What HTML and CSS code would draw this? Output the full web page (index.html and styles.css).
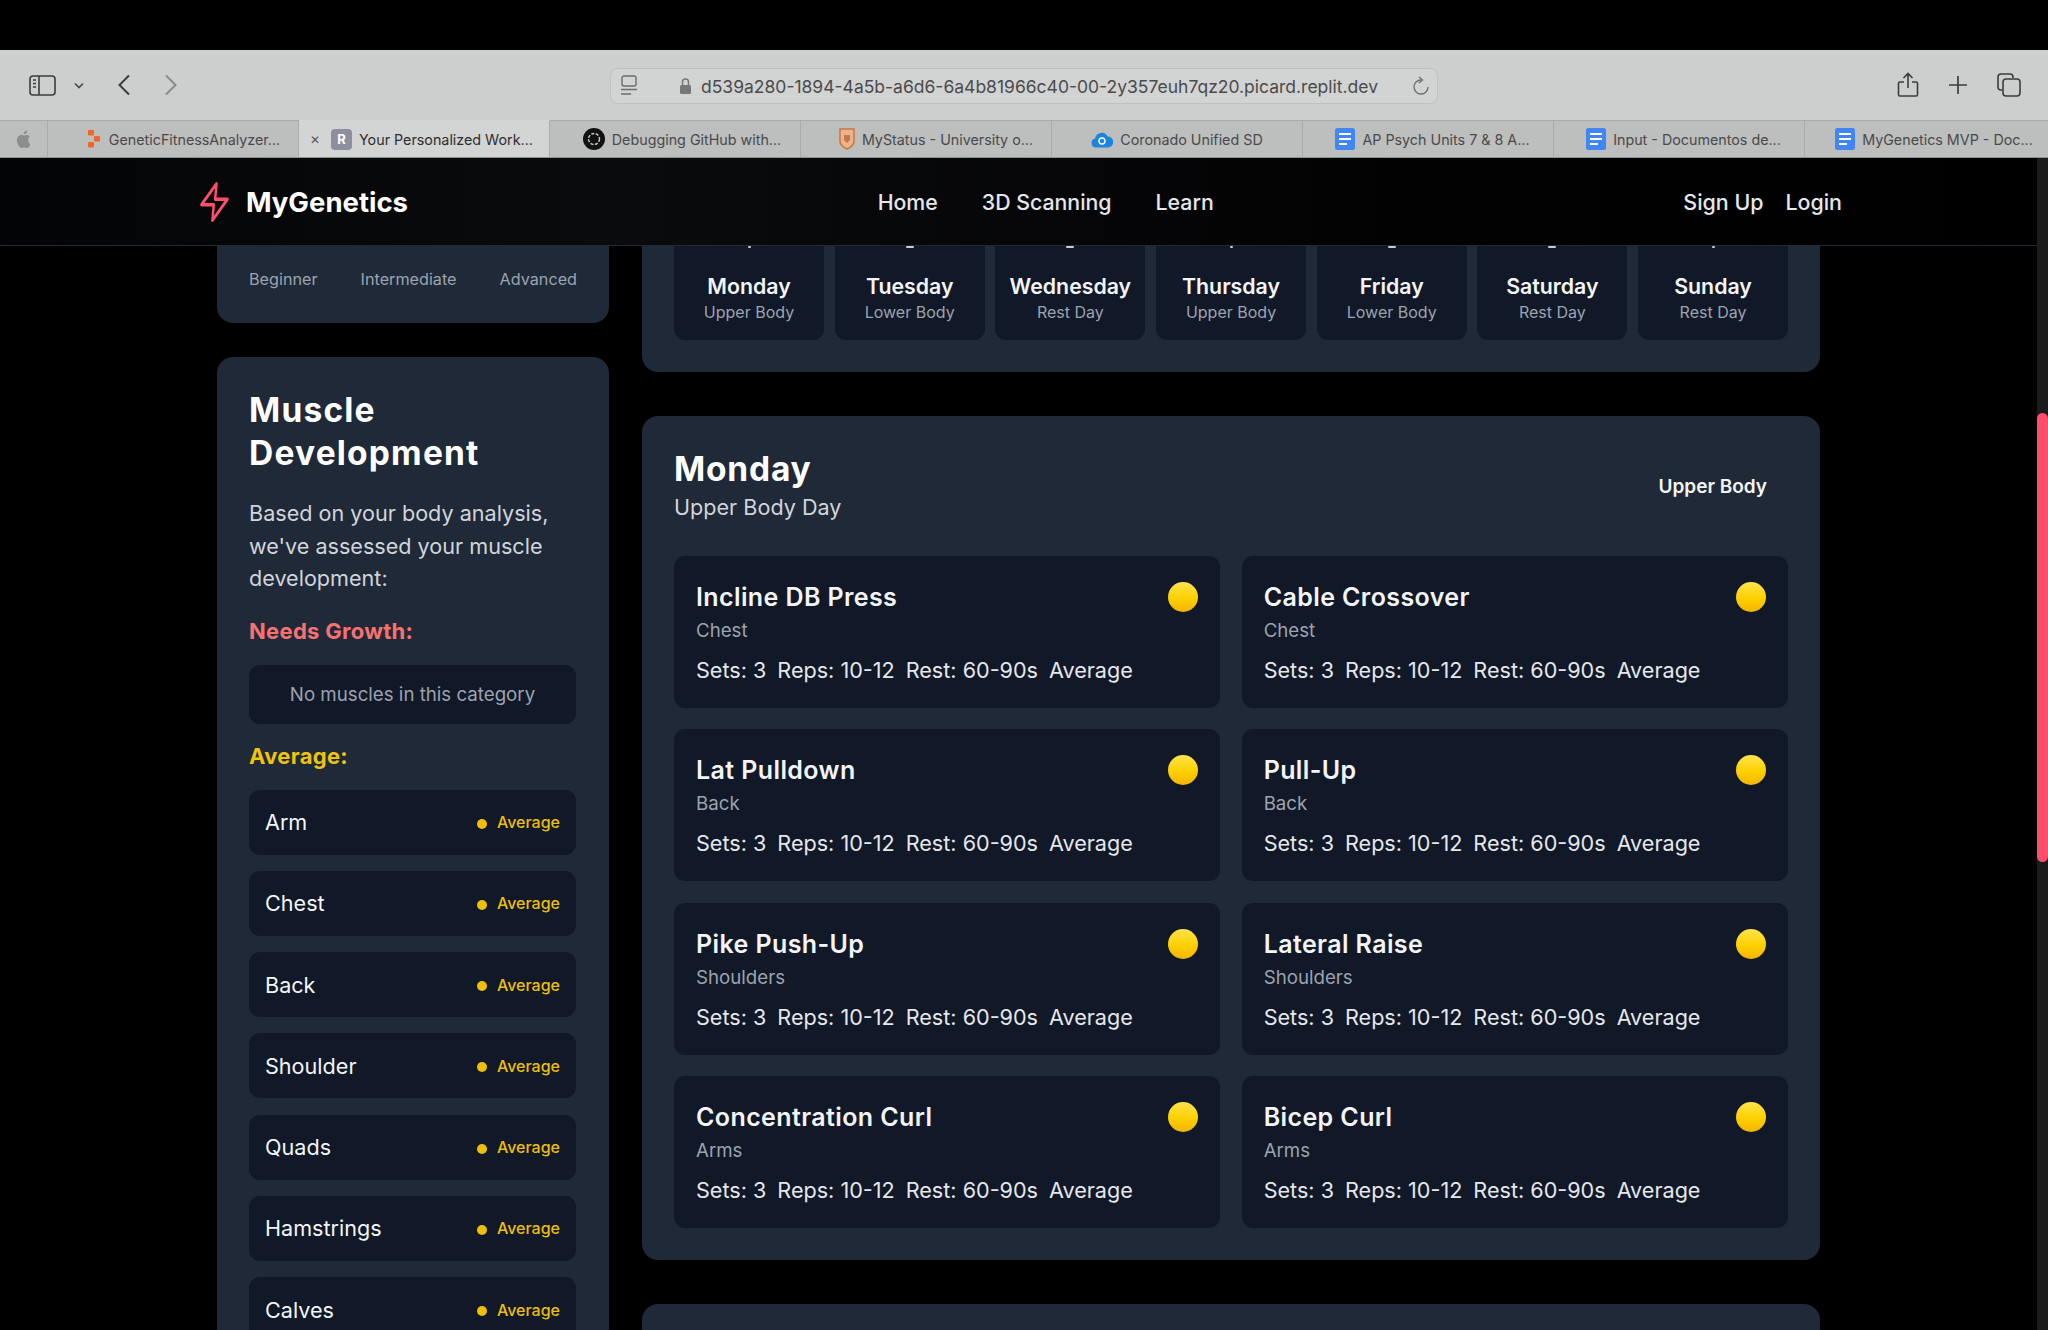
FILE: index.html
```html
<!DOCTYPE html>
<html lang="en">
<head>
  <meta charset="UTF-8">
  <title>MyGenetics</title>
  <link rel="stylesheet" href="styles.css">
</head>
<body>
  <div class="top-black"></div>

  <div class="browser">
    <div class="toolbar">
      <div class="tool-left">
        <svg class="ic-sidebar" width="27" height="21" viewBox="0 0 27 21" fill="none" stroke="#3c3c3c" stroke-width="1.6"><rect x="1" y="1" width="25" height="19" rx="3"/><path d="M10 1v19"/><path d="M4 5h3M4 8.500h3M4 12h3" stroke-width="1.400"/></svg>
        <svg class="ic-chevron" width="10" height="7" viewBox="0 0 10 7" fill="none" stroke="#4a4a4a" stroke-width="1.700"><path d="M1 1.500l4 4 4-4"/></svg>
        <svg class="ic-back" width="14" height="22" viewBox="0 0 14 22" fill="none" stroke="#3c3c3c" stroke-width="2"><path d="M12 1.500L2.500 11l9.500 9.500"/></svg>
        <svg class="ic-forward" width="14" height="22" viewBox="0 0 14 22" fill="none" stroke="#8a8a8a" stroke-width="2"><path d="M2 1.500L11.500 11 2 20.500"/></svg>
      </div>
      <div class="address">
        <svg width="18" height="22" viewBox="0 0 18 22" fill="none" stroke="#6e6e6e" stroke-width="1.400"><rect x="2" y="1" width="14" height="10" rx="2"/><path d="M1 14.500h16M1 19h10"/></svg>
        <div class="url">
          <svg width="13" height="18" viewBox="0 0 13 18"><path d="M3.500 8V5a3 3 0 0 1 6 0v3" fill="none" stroke="#777" stroke-width="1.500"/><rect x="1" y="8" width="11" height="9" rx="1.500" fill="#777"/></svg>
          <span>d539a280-1894-4a5b-a6d6-6a4b81966c40-00-2y357euh7qz20.picard.replit.dev</span>
        </div>
        <svg width="18" height="20" viewBox="0 0 18 20" fill="none" stroke="#6e6e6e" stroke-width="1.300"><path d="M9 4a7 7 0 1 0 7 7"/><path d="M7 1l3.500 3L7 7"/></svg>
      </div>
      <div class="tool-right">
        <svg width="22" height="26" viewBox="0 0 22 26" fill="none" stroke="#3c3c3c" stroke-width="1.600"><path d="M7 10H3a1.500 1.500 0 0 0-1.500 1.500v11A1.500 1.500 0 0 0 3 24h16a1.500 1.500 0 0 0 1.500-1.500v-11A1.500 1.500 0 0 0 19 10h-4"/><path d="M11 16V1.500M6.500 6L11 1.500 15.500 6"/></svg>
        <svg width="18" height="18" viewBox="0 0 18 18" fill="none" stroke="#3c3c3c" stroke-width="1.700"><path d="M9 0v18M0 9h18"/></svg>
        <svg width="24" height="24" viewBox="0 0 24 24" fill="none" stroke="#3c3c3c" stroke-width="1.600"><path d="M5 17H4a3 3 0 0 1-3-3V4a3 3 0 0 1 3-3h9a3 3 0 0 1 3 3v1"/><rect x="6" y="6" width="17" height="17" rx="3"/></svg>
      </div>
    </div>

    <div class="tabs">
      <div class="tab tab-apple">
        <svg width="15" height="18" viewBox="0 0 15 18" fill="#8d8d8d"><path d="M12.200 9.500c0-2 1.600-2.900 1.700-3-1-1.400-2.400-1.600-2.900-1.600-1.200-.1-2.400.7-3 .7s-1.600-.7-2.600-.7C3.900 5 2.500 5.700 1.800 7-.2 9.500 1.200 13.700 2.900 16c.9 1.200 1.800 2 2.800 2s1.400-.6 2.600-.6 1.600.6 2.600.6 1.800-1 2.600-2.100c.6-.9 1-1.700 1-1.800 0 0-2.300-.9-2.300-4.600z"/><path d="M10.300 3c.5-.7.900-1.600.8-2.600-.8 0-1.800.5-2.400 1.200-.5.6-1 1.600-.8 2.500.9.100 1.800-.4 2.400-1.100z"/></svg>
      </div>
      <div class="tab tab-first">
        <svg class="fav" width="14" height="18" viewBox="0 0 14 18" fill="#f26522"><rect width="6" height="5.500" rx="1"/><rect x="6" y="6" width="6" height="5.500" rx="1"/><rect y="12" width="6" height="5.500" rx="1"/></svg>
        <span>GeneticFitnessAnalyzer...</span>
      </div>
      <div class="tab tab-active">
        <span class="close">&#x2715;</span>
        <span class="fav-r">R</span>
        <span>Your Personalized Work...</span>
      </div>
      <div class="tab">
        <svg class="fav" width="22" height="22" viewBox="0 0 22 22"><circle cx="11" cy="11" r="11" fill="#111"/><circle cx="11" cy="11" r="5.500" fill="none" stroke="#ccc" stroke-width="1.400" stroke-dasharray="3 1.500"/></svg>
        <span>Debugging GitHub with...</span>
      </div>
      <div class="tab tab-status">
        <svg class="fav" width="16" height="22" viewBox="0 0 16 22"><path d="M1 1h14v12c0 4-3.500 6.500-7 8-3.500-1.500-7-4-7-8z" fill="#e9b48f" stroke="#c9773f" stroke-width="1.500"/><path d="M5 7h6v5l-3 3-3-3z" fill="#c9773f"/></svg>
        <span>MyStatus - University o...</span>
      </div>
      <div class="tab tab-center">
        <svg class="fav" width="22" height="18" viewBox="0 0 22 18"><path d="M5 17.500a4.500 4.500 0 0 1-.8-8.900A6.500 6.500 0 0 1 16.500 6.500a5.500 5.500 0 0 1 .5 11z" fill="#1b84e0"/><circle cx="11" cy="11" r="3" fill="none" stroke="#fff" stroke-width="1.400"/></svg>
        <span>Coronado Unified SD</span>
      </div>
      <div class="tab tab-doc">
        <svg class="fav" width="20" height="22" viewBox="0 0 20 22"><rect width="20" height="22" rx="2.500" fill="#4285f4"/><path d="M4 6h12M4 11h12M4 16h8" stroke="#fff" stroke-width="2.200"/></svg>
        <span>AP Psych Units 7 &amp; 8 A...</span>
      </div>
      <div class="tab tab-doc">
        <svg class="fav" width="20" height="22" viewBox="0 0 20 22"><rect width="20" height="22" rx="2.500" fill="#4285f4"/><path d="M4 6h12M4 11h12M4 16h8" stroke="#fff" stroke-width="2.200"/></svg>
        <span>Input - Documentos de...</span>
      </div>
      <div class="tab tab-last">
        <svg class="fav" width="20" height="22" viewBox="0 0 20 22"><rect width="20" height="22" rx="2.500" fill="#4285f4"/><path d="M4 6h12M4 11h12M4 16h8" stroke="#fff" stroke-width="2.200"/></svg>
        <span>MyGenetics MVP - Doc...</span>
      </div>
    </div>
  </div>

  <div class="viewport">
    <div class="page">
      <nav class="nav">
        <a class="logo">
          <svg width="42" height="44" viewBox="0 0 24 24" fill="none" stroke="#ff4d6d" stroke-width="1.800" stroke-linejoin="round" stroke-linecap="round" preserveAspectRatio="none"><polygon points="13.500 2 2.500 13.500 11.500 13.500 10.500 22 21.500 10.500 12.500 10.500"/></svg>
          <span>MyGenetics</span>
        </a>
        <div class="nav-links">
          <a>Home</a>
          <a>3D Scanning</a>
          <a>Learn</a>
        </div>
        <div class="nav-auth">
          <a>Sign Up</a>
          <a>Login</a>
        </div>
      </nav>

      <main class="content">
        <aside class="sidebar">
          <div class="card level-card">
            <span>Beginner</span>
            <span>Intermediate</span>
            <span>Advanced</span>
          </div>

          <div class="card muscle-card">
            <h2>Muscle Development</h2>
            <p class="intro">Based on your body analysis, we've assessed your muscle development:</p>

            <h3 class="needs">Needs Growth:</h3>
            <div class="empty">No muscles in this category</div>

            <h3 class="avg">Average:</h3>
            <div class="muscle-list">
              <div class="muscle"><span>Arm</span><span class="badge"><i></i>Average</span></div>
              <div class="muscle"><span>Chest</span><span class="badge"><i></i>Average</span></div>
              <div class="muscle"><span>Back</span><span class="badge"><i></i>Average</span></div>
              <div class="muscle"><span>Shoulder</span><span class="badge"><i></i>Average</span></div>
              <div class="muscle"><span>Quads</span><span class="badge"><i></i>Average</span></div>
              <div class="muscle"><span>Hamstrings</span><span class="badge"><i></i>Average</span></div>
              <div class="muscle"><span>Calves</span><span class="badge"><i></i>Average</span></div>
            </div>
          </div>
        </aside>

        <section class="plan">
          <div class="card week-card">
            <div class="day"><b class="cut cut-s"></b><strong>Monday</strong><small>Upper Body</small></div>
            <div class="day"><b class="cut"></b><strong>Tuesday</strong><small>Lower Body</small></div>
            <div class="day"><b class="cut"></b><strong>Wednesday</strong><small>Rest Day</small></div>
            <div class="day"><b class="cut cut-s"></b><strong>Thursday</strong><small>Upper Body</small></div>
            <div class="day"><b class="cut"></b><strong>Friday</strong><small>Lower Body</small></div>
            <div class="day"><b class="cut"></b><strong>Saturday</strong><small>Rest Day</small></div>
            <div class="day"><b class="cut cut-s"></b><strong>Sunday</strong><small>Rest Day</small></div>
          </div>

          <div class="card workout-card">
            <div class="workout-head">
              <div>
                <h2>Monday</h2>
                <p>Upper Body Day</p>
              </div>
              <span class="tag">Upper Body</span>
            </div>
            <div class="exercises">
              <div class="exercise">
                <div class="ex-top"><h4>Incline DB Press</h4><i class="light"></i></div>
                <div class="ex-muscle">Chest</div>
                <div class="ex-meta"><span>Sets: 3</span><span>Reps: 10-12</span><span>Rest: 60-90s</span><span>Average</span></div>
              </div>
              <div class="exercise">
                <div class="ex-top"><h4>Cable Crossover</h4><i class="light"></i></div>
                <div class="ex-muscle">Chest</div>
                <div class="ex-meta"><span>Sets: 3</span><span>Reps: 10-12</span><span>Rest: 60-90s</span><span>Average</span></div>
              </div>
              <div class="exercise">
                <div class="ex-top"><h4>Lat Pulldown</h4><i class="light"></i></div>
                <div class="ex-muscle">Back</div>
                <div class="ex-meta"><span>Sets: 3</span><span>Reps: 10-12</span><span>Rest: 60-90s</span><span>Average</span></div>
              </div>
              <div class="exercise">
                <div class="ex-top"><h4>Pull-Up</h4><i class="light"></i></div>
                <div class="ex-muscle">Back</div>
                <div class="ex-meta"><span>Sets: 3</span><span>Reps: 10-12</span><span>Rest: 60-90s</span><span>Average</span></div>
              </div>
              <div class="exercise">
                <div class="ex-top"><h4>Pike Push-Up</h4><i class="light"></i></div>
                <div class="ex-muscle">Shoulders</div>
                <div class="ex-meta"><span>Sets: 3</span><span>Reps: 10-12</span><span>Rest: 60-90s</span><span>Average</span></div>
              </div>
              <div class="exercise">
                <div class="ex-top"><h4>Lateral Raise</h4><i class="light"></i></div>
                <div class="ex-muscle">Shoulders</div>
                <div class="ex-meta"><span>Sets: 3</span><span>Reps: 10-12</span><span>Rest: 60-90s</span><span>Average</span></div>
              </div>
              <div class="exercise">
                <div class="ex-top"><h4>Concentration Curl</h4><i class="light"></i></div>
                <div class="ex-muscle">Arms</div>
                <div class="ex-meta"><span>Sets: 3</span><span>Reps: 10-12</span><span>Rest: 60-90s</span><span>Average</span></div>
              </div>
              <div class="exercise">
                <div class="ex-top"><h4>Bicep Curl</h4><i class="light"></i></div>
                <div class="ex-muscle">Arms</div>
                <div class="ex-meta"><span>Sets: 3</span><span>Reps: 10-12</span><span>Rest: 60-90s</span><span>Average</span></div>
              </div>
            </div>
          </div>

          <div class="card next-card"></div>
        </section>
      </main>
    </div>

    <div class="track"><div class="thumb"></div></div>
  </div>
</body>
</html>
```

FILE: styles.css
```css
* {
  box-sizing: border-box;
}
html, body {
  margin: 0;
  height: 1330px;
  overflow: hidden;
  background-color: #000;
}
body {
  font-family: Inter, "Liberation Sans", sans-serif;
  display: flex;
  flex-direction: column;
  color: #fff;
}
h2, h3, h4, p {
  margin: 0;
}

.top-black {
  height: 50px;
  flex: none;
}

/* browser chrome */
.browser {
  flex: none;
  height: 108px;
  background-color: #cdcece;
  color: #444;
}
.toolbar {
  height: 70px;
  display: flex;
  align-items: center;
  padding: 0 27px 0 29px;
}
.tool-left {
  width: 581px;
  display: flex;
  align-items: center;
}
.ic-chevron {
  margin-left: 18px;
}
.ic-back {
  margin-left: 33px;
}
.ic-forward {
  margin-left: 33px;
}
.address {
  width: 828px;
  height: 36px;
  margin-top: 2px;
  border: 1px solid #bfc0c0;
  border-radius: 8px;
  background-color: #d2d3d3;
  display: flex;
  align-items: center;
  padding: 0 7px 0 9px;
  justify-content: space-between;
}
.url {
  flex: 1;
  display: flex;
  align-items: center;
  gap: 9px;
  padding-left: 41px;
  font-size: 17.500px;
  color: #4b4b4b;
}
.tool-right {
  flex: 1;
  display: flex;
  align-items: center;
  justify-content: flex-end;
  gap: 30px;
}
.tabs {
  height: 38px;
  display: flex;
  border-top: 1px solid #a9aaaa;
  border-bottom: 1px solid #8f9090;
  background-color: #bdbebe;
}
.tab {
  width: 251px;
  flex: none;
  display: flex;
  align-items: center;
  justify-content: center;
  gap: 7px;
  padding-left: 14px;
  font-size: 14.300px;
  color: #4a4a4a;
  border-right: 1px solid #aaabab;
  white-space: nowrap;
}
.tab-apple {
  width: 48px;
  padding-left: 0;
}
.tab-first {
  padding-left: 22px;
}
.tab-status {
  padding-left: 20px;
}
.tab-center {
  padding-left: 0;
}
.tab-doc {
  padding-left: 9px;
}
.tab-active {
  background-color: #d3d4d4;
  color: #2e2e2e;
  justify-content: flex-start;
  padding-left: 11px;
  border-top: 1px solid #d3d4d4;
  margin-top: -1px;
}
.tab-last {
  width: 244px;
  border-right: none;
}
.close {
  font-size: 12px;
  color: #555;
  margin-right: 4px;
}
.fav-r {
  width: 21px;
  height: 21px;
  border-radius: 4px;
  background-color: #8e8f9e;
  color: #fff;
  font-size: 13px;
  font-weight: 700;
  text-align: center;
  line-height: 21px;
}

/* viewport */
.viewport {
  flex: 1;
  min-height: 0;
  display: flex;
}
.page {
  flex: 1;
  min-width: 0;
  display: flex;
  flex-direction: column;
}
.track {
  width: 11px;
  flex: none;
  background-color: #1b1b1b;
  padding-top: 255px;
}
.thumb {
  height: 449px;
  background-color: #ff4d6d;
  border-radius: 6px;
}

/* nav */
.nav {
  flex: none;
  height: 88px;
  padding: 0 195px 0 198px;
  display: flex;
  align-items: center;
  justify-content: space-between;
  background: linear-gradient(90deg, #030405, #0a0b0d 30%, #020203 70%, #000);
  border-bottom: 1px solid #1f2937;
}
.logo {
  width: 210px;
  display: flex;
  align-items: center;
  gap: 15px;
  font-size: 27.500px;
  font-weight: 700;
}
.nav-links {
  display: flex;
  gap: 44px;
  font-size: 21.300px;
  font-weight: 500;
  color: #e5e7eb;
}
.nav-auth {
  display: flex;
  gap: 22px;
  font-size: 21.400px;
  font-weight: 500;
  color: #e5e7eb;
}

/* layout */
.content {
  flex: 1;
  min-height: 0;
  overflow: hidden;
  padding-left: 217px;
  display: flex;
  gap: 33px;
}
.sidebar {
  width: 392px;
  flex: none;
  display: flex;
  flex-direction: column;
  gap: 34px;
}
.plan {
  width: 1178px;
  flex: none;
  display: flex;
  flex-direction: column;
  gap: 44px;
}
.card {
  background-color: #1f2937;
  border-radius: 16px;
  flex: none;
}

/* sidebar */
.level-card {
  height: 77px;
  padding: 21px 32px 0;
  display: flex;
  justify-content: space-between;
  border-top-left-radius: 0;
  border-top-right-radius: 0;
  font-size: 16.200px;
  line-height: 24px;
  color: #9ca3af;
}
.muscle-card {
  padding: 32px 33px 31px 32px;
}
.muscle-card h2 {
  font-size: 33.500px;
  line-height: 43px;
  font-weight: 700;
  letter-spacing: 1.2px;
}
.intro {
  margin-top: 22px;
  font-size: 21.600px;
  line-height: 32.500px;
  color: #d1d5db;
}
.muscle-card h3 {
  font-size: 22px;
  line-height: 32px;
  font-weight: 700;
  letter-spacing: 0.3px;
}
.needs {
  margin-top: 20px;
  color: #f87171;
}
.avg {
  margin-top: 16px;
  color: #f0c30f;
}
.empty {
  margin-top: 18px;
  height: 59px;
  border-radius: 11px;
  background-color: #111827;
  display: flex;
  align-items: center;
  justify-content: center;
  font-size: 18.700px;
  color: #9ca3af;
}
.muscle-list {
  margin-top: 18px;
  display: flex;
  flex-direction: column;
  gap: 16.300px;
}
.muscle {
  height: 65px;
  padding: 0 16px;
  border-radius: 11px;
  background-color: #111827;
  display: flex;
  align-items: center;
  justify-content: space-between;
  font-size: 21.600px;
  color: #f3f4f6;
}
.badge {
  display: flex;
  align-items: center;
  gap: 10px;
  font-size: 16px;
  font-weight: 500;
  color: #ecbf0b;
}
.badge i {
  width: 10px;
  height: 10px;
  margin-top: 3px;
  border-radius: 50%;
  background-color: #ecbf0b;
}

/* week strip */
.week-card {
  height: 126px;
  padding: 0 32px;
  display: flex;
  gap: 10.670px;
  border-top-left-radius: 0;
  border-top-right-radius: 0;
}
.day {
  flex: 1;
  height: 94px;
  border-radius: 0 0 11px 11px;
  background-color: #111827;
  display: flex;
  flex-direction: column;
  align-items: center;
}
.cut {
  width: 8px;
  height: 2px;
  margin-bottom: 24px;
  border-radius: 1px;
  background-color: #c9ccd1;
}
.cut-s {
  width: 3px;
}
.day strong {
  font-size: 21.300px;
  line-height: 28px;
  font-weight: 600;
  color: #f3f4f6;
}
.day small {
  font-size: 16px;
  line-height: 24px;
  color: #9ca3af;
}

/* workout */
.workout-card {
  height: 844px;
  padding: 31px 32px;
}
.workout-head {
  height: 109px;
  display: flex;
  justify-content: space-between;
}
.workout-head h2 {
  font-size: 33.500px;
  line-height: 45px;
  font-weight: 700;
  letter-spacing: 0.8px;
}
.workout-head p {
  font-size: 21.600px;
  line-height: 30px;
  color: #d1d5db;
}
.tag {
  margin: 26px 21px 0 0;
  font-size: 19px;
  line-height: 28px;
  font-weight: 600;
  color: #f3f4f6;
}
.exercises {
  display: grid;
  grid-template-columns: 1fr 1fr;
  gap: 21.300px;
}
.exercise {
  height: 152px;
  padding: 22px 22px 21px;
  border-radius: 11px;
  background-color: #111827;
}
.ex-top {
  display: flex;
  align-items: center;
  justify-content: space-between;
  height: 38px;
}
.ex-top h4 {
  font-size: 25px;
  font-weight: 600;
  letter-spacing: 0.4px;
  color: #f3f4f6;
}
.light {
  width: 30px;
  height: 30px;
  border-radius: 50%;
  background: linear-gradient(#ffe34d, #fdd000 55%, #f3b400);
}
.ex-muscle {
  margin-top: 2px;
  font-size: 18.700px;
  line-height: 26px;
  color: #9ca3af;
}
.ex-meta {
  margin-top: 12px;
  display: flex;
  gap: 11px;
  font-size: 21.600px;
  line-height: 28px;
  color: #e5e7eb;
}
.next-card {
  height: 120px;
}
```
